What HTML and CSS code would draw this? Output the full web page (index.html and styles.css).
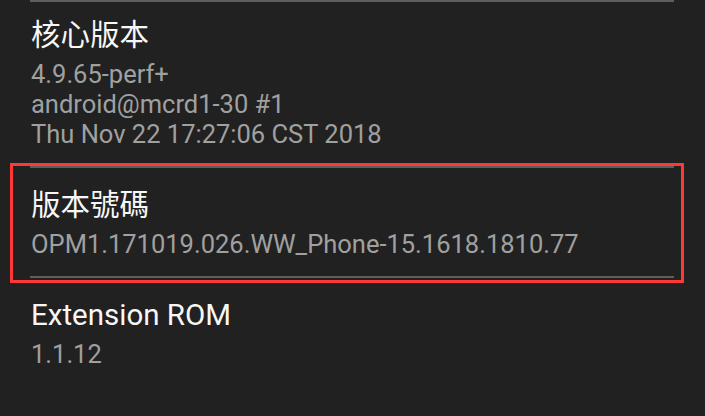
FILE: index.html
```html
<!DOCTYPE html>
<html lang="zh-Hant">
<head>
  <meta charset="UTF-8">
  <title>關於手機</title>
  <link rel="stylesheet" href="styles.css">
</head>
<body>
  <div class="list">
    <div class="item">
      <div class="item-title">核心版本</div>
      <div class="item-summary">4.9.65-perf+<br>android@mcrd1-30 #1<br>Thu Nov 22 17:27:06 CST 2018</div>
    </div>

    <div class="item marked">
      <div class="item-title">版本號碼</div>
      <div class="item-summary">OPM1.171019.026.WW_Phone-15.1618.1810.77</div>
    </div>

    <div class="item">
      <div class="item-title">Extension ROM</div>
      <div class="item-summary">1.1.12</div>
    </div>
  </div>
</body>
</html>
```

FILE: styles.css
```css
:root {
  --bg-color: #212121;
  --title-color: #f7f7f7;
  --summary-color: #a0a0a0;
  --divider: #5e5e5e;
  --mark: #ff3838;
}

html, body {
  margin: 0;
  height: 100%;
  background: var(--bg-color);
}

body {
  font-family: Roboto, "Noto Sans CJK TC", sans-serif;
  overflow: hidden;
}

.list {
  padding: 0 31px 0 30px;
}

.item {
  border-top: 2px solid var(--divider);
  padding: 19px 1px 17px;
}

.item:first-child {
  padding-top: 15px;
}

.item-title {
  font-size: 29.5px;
  line-height: 36px;
  color: var(--title-color);
  margin-bottom: 6px;
}

.item-summary {
  font-size: 25.5px;
  line-height: 30px;
  color: var(--summary-color);
}

/* red frame around the highlighted row */
.marked {
  position: relative;
}

.marked::after {
  content: "";
  position: absolute;
  top: -5px;
  bottom: -7px;
  left: -20px;
  right: -10px;
  border: 3px solid var(--mark);
  pointer-events: none;
}
```
